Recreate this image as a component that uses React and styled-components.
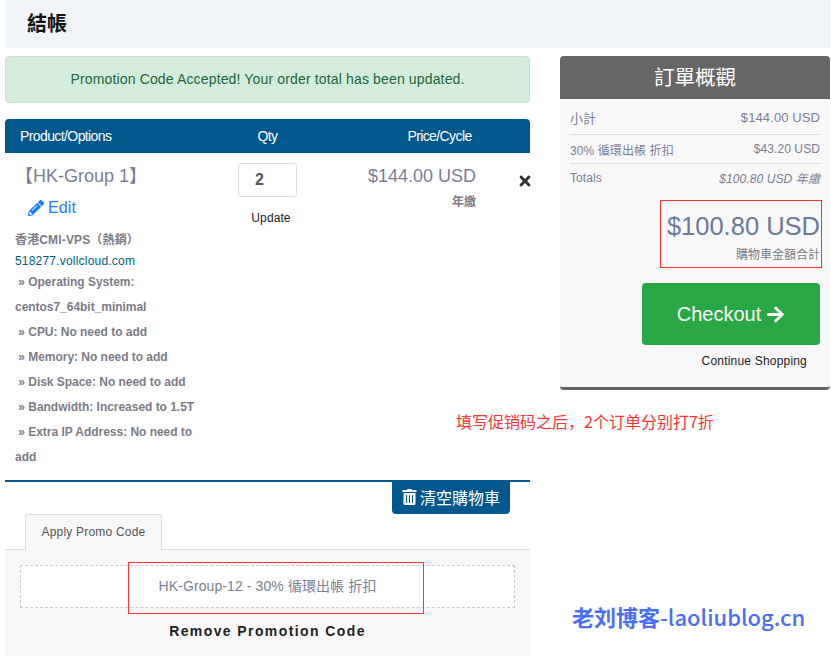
import React from 'react';
import styled, { createGlobalStyle } from 'styled-components';
import { FaPencilAlt, FaTimes, FaArrowRight, FaTrashAlt } from 'react-icons/fa';

const GlobalStyle = createGlobalStyle`
    html, body {
        margin: 0;
        padding: 0;
        background: #fff;
    }
    body {
        font-family: "Liberation Sans", "Noto Sans CJK TC", sans-serif;
        overflow: hidden;
    }
`;

const Page = styled.div`
    position: relative;
    width: 831px;
    height: 656px;
    padding-left: 5px;
    box-sizing: border-box;
    overflow: hidden;
`;

const Header = styled.div`
    height: 48px;
    width: 825px;
    background: #f1f5f9;
    display: flex;
    align-items: center;
    padding: 0 0 3px 22px;
    box-sizing: border-box;
`;

const Title = styled.h1`
    margin: 0;
    font-size: 20px;
    font-weight: 700;
    color: #111;
`;

const Columns = styled.div`
    display: flex;
    gap: 30px;
    margin-top: 8px;
    align-items: flex-start;
`;

const Main = styled.div`
    width: 525px;
`;

const Alert = styled.div`
    height: 47px;
    box-sizing: border-box;
    background: #d4edda;
    border: 1px solid #c3e6cb;
    border-radius: 4px;
    color: #22653a;
    font-size: 14px;
    letter-spacing: 0.15px;
    line-height: 45px;
    text-align: center;
`;

const CartGrid = styled.div`
    display: grid;
    grid-template-columns: 200px 125px 150px 50px;
`;

const TableHead = styled(CartGrid)`
    margin-top: 16px;
    height: 34px;
    align-items: center;
    background: #00588c;
    border-radius: 4px 4px 0 0;
    color: #fff;
    font-size: 14px;
    letter-spacing: -0.6px;
`;

const HeadCell = styled.div`
    text-align: ${p => p.$align || 'center'};
    padding-left: ${p => p.$indent || 0}px;
    grid-column: span ${p => p.$span || 1};
`;

const CartRow = styled(CartGrid)`
    height: 327px;
    border-bottom: 2px solid #00588c;
`;

const ProductCell = styled.div`
    padding: 10px 0 0 10px;
`;

const ProductName = styled.div`
    font-size: 18px;
    line-height: 26px;
    color: #7a7f96;
`;

const EditLink = styled.div`
    display: flex;
    align-items: center;
    gap: 4px;
    margin: 7px 0 0 13px;
    font-size: 16px;
    letter-spacing: 0.1px;
    line-height: 24px;
    color: #1a7dff;
    svg {
        width: 16px;
        height: 16px;
    }
`;

const Group = styled.div`
    margin-top: 10px;
    font-size: 12px;
    font-weight: 700;
    letter-spacing: 0.15px;
    line-height: 21px;
    color: #7c7c86;
`;

const Domain = styled.div`
    font-size: 12px;
    letter-spacing: 0.2px;
    line-height: 21px;
    color: #00617f;
`;

const Options = styled.div`
    width: 185px;
    font-size: 12px;
    font-weight: 700;
    letter-spacing: -0.03px;
    line-height: 25px;
    color: #7c7c86;
    margin-top: -2px;
`;

const QtyCell = styled.div`
    display: flex;
    flex-direction: column;
    align-items: center;
    padding-top: 10px;
`;

const QtyBox = styled.div`
    width: 59px;
    height: 34px;
    box-sizing: border-box;
    border: 1px solid #ddd;
    border-radius: 3px;
    font-size: 16px;
    font-weight: 700;
    line-height: 32px;
    padding-left: 16px;
    color: #555;
`;

const UpdateLabel = styled.div`
    margin: 12px 0 0 7px;
    font-size: 12px;
    letter-spacing: 0.1px;
    line-height: 18px;
    color: #222;
`;

const PriceCell = styled.div`
    text-align: right;
    padding: 11px 4px 0 0;
`;

const Price = styled.div`
    font-size: 18px;
    line-height: 24px;
    color: #7a7f96;
`;

const Cycle = styled.div`
    margin-top: 5px;
    font-size: 12px;
    font-weight: 700;
    line-height: 18px;
    color: #7c7c86;
`;

const RemoveCell = styled.div`
    padding: 20px 0 0 37px;
    color: #333;
    svg {
        width: 16px;
        height: 16px;
    }
`;

const EmptyRow = styled.div`
    display: flex;
    justify-content: flex-end;
    padding-right: 20px;
`;

const EmptyButton = styled.div`
    display: flex;
    align-items: center;
    gap: 3px;
    height: 32px;
    padding: 0 10px 2px;
    box-sizing: border-box;
    background: #00588c;
    border-radius: 0 0 4px 4px;
    color: #fff;
    font-size: 16px;
    svg {
        width: 15px;
        height: 16px;
    }
`;

const Tabs = styled.div`
    display: flex;
    padding-left: 20px;
    border-bottom: 1px solid #ddd;
    height: 35px;
`;

const Tab = styled.div`
    width: 137px;
    height: 36px;
    box-sizing: border-box;
    border: 1px solid #ddd;
    border-bottom: 0;
    border-radius: 3px 3px 0 0;
    background: #f8f8f8;
    font-size: 12px;
    letter-spacing: 0.2px;
    line-height: 34px;
    text-align: center;
    color: #555;
`;

const PromoPanel = styled.div`
    height: 106px;
    background: #f8f8f8;
    padding: 15px 15px 0;
    box-sizing: border-box;
`;

const PromoCode = styled.div`
    height: 43px;
    box-sizing: border-box;
    border: 1px dashed #ccc;
    background: #fff;
    font-size: 14px;
    letter-spacing: 0.1px;
    line-height: 41px;
    text-align: center;
    color: #7a7f96;
`;

const RemovePromo = styled.div`
    margin-top: 14px;
    font-size: 14px;
    font-weight: 700;
    letter-spacing: 1.4px;
    line-height: 18px;
    text-align: center;
    color: #222;
`;

const Sidebar = styled.div`
    width: 270px;
    border-radius: 4px;
    background: #f8f8f8;
    border-bottom: 3px solid #666;
`;

const SideTitle = styled.div`
    height: 43px;
    background: #666;
    border-radius: 4px 4px 0 0;
    color: #fff;
    font-size: 20.5px;
    line-height: 43px;
    text-align: center;
`;

const SideBody = styled.div`
    padding: 7px 10px 0;
    height: 288px;
    box-sizing: border-box;
`;

const SummaryRow = styled.div`
    display: flex;
    justify-content: space-between;
    align-items: center;
    height: ${p => p.$height}px;
    box-sizing: border-box;
    padding-bottom: ${p => p.$pad || 0}px;
    font-size: ${p => p.$size || 12}px;
    color: #7a7f96;
    letter-spacing: 0.1px;
    border-bottom: ${p => (p.$line ? '1px solid #ddd' : '0')};
`;

const Amount = styled.span`
    font-style: ${p => (p.$italic ? 'italic' : 'normal')};
`;

const TotalBlock = styled.div`
    margin-top: 18px;
    text-align: right;
`;

const TotalPrice = styled.div`
    font-size: 25.5px;
    line-height: 34px;
    color: #6c7a99;
`;

const TotalLabel = styled.div`
    margin-top: 2px;
    font-size: 12px;
    line-height: 20px;
    color: #7c7c86;
`;

const CheckoutButton = styled.div`
    display: flex;
    align-items: center;
    justify-content: center;
    gap: 5px;
    margin: 18px 0 0 auto;
    width: 178px;
    height: 62px;
    background: #28a745;
    border-radius: 4px;
    color: #fff;
    font-size: 20px;
    svg {
        width: 19px;
        height: 19px;
    }
`;

const ContinueLink = styled.div`
    margin: 8px 13px 0 0;
    text-align: right;
    font-size: 12px;
    line-height: 16px;
    letter-spacing: 0.2px;
    color: #222;
`;

const RedFrame = styled.div`
    position: absolute;
    left: ${p => p.$x}px;
    top: ${p => p.$y}px;
    width: ${p => p.$w}px;
    height: ${p => p.$h}px;
    box-sizing: border-box;
    border: 1px solid #f33;
`;

const Annotation = styled.div`
    position: absolute;
    left: 456px;
    top: 411px;
    font-family: "Noto Sans CJK SC", sans-serif;
    font-size: 16px;
    line-height: 20px;
    color: #f33;
    white-space: nowrap;
`;

const Watermark = styled.div`
    position: absolute;
    left: 572px;
    top: 602px;
    font-family: "Noto Sans CJK SC", sans-serif;
    font-size: 22px;
    font-weight: 700;
    line-height: 28px;
    color: #4a6ef5;
    white-space: nowrap;
`;

const WatermarkLatin = styled.span`
    font-size: 22px;
    font-weight: 500;
`;

const options = [
    '\u00a0» Operating System: centos7_64bit_minimal',
    '\u00a0» CPU: No need to add',
    '\u00a0» Memory: No need to add',
    '\u00a0» Disk Space: No need to add',
    '\u00a0» Bandwidth: Increased to 1.5T',
    '\u00a0» Extra IP Address: No need to add',
];

export default function App() {
    return (
        <Page>
            <GlobalStyle />
            <Header>
                <Title>結帳</Title>
            </Header>
            <Columns>
                <Main>
                    <Alert>Promotion Code Accepted! Your order total has been updated.</Alert>
                    <TableHead>
                        <HeadCell $align="left" $indent={15}>Product/Options</HeadCell>
                        <HeadCell>Qty</HeadCell>
                        <HeadCell $span={2} $indent={19}>Price/Cycle</HeadCell>
                    </TableHead>
                    <CartRow>
                        <ProductCell>
                            <ProductName>【HK-Group 1】</ProductName>
                            <EditLink><FaPencilAlt />Edit</EditLink>
                            <Group>香港CMI-VPS（熱銷）</Group>
                            <Domain>518277.vollcloud.com</Domain>
                            <Options>
                                {options.map(o => <div key={o}>{o}</div>)}
                            </Options>
                        </ProductCell>
                        <QtyCell>
                            <QtyBox>2</QtyBox>
                            <UpdateLabel>Update</UpdateLabel>
                        </QtyCell>
                        <PriceCell>
                            <Price>$144.00 USD</Price>
                            <Cycle>年繳</Cycle>
                        </PriceCell>
                        <RemoveCell><FaTimes /></RemoveCell>
                    </CartRow>
                    <EmptyRow>
                        <EmptyButton><FaTrashAlt />清空購物車</EmptyButton>
                    </EmptyRow>
                    <Tabs>
                        <Tab>Apply Promo Code</Tab>
                    </Tabs>
                    <PromoPanel>
                        <PromoCode>HK-Group-12 - 30% 循環出帳 折扣</PromoCode>
                        <RemovePromo>Remove Promotion Code</RemovePromo>
                    </PromoPanel>
                </Main>
                <Sidebar>
                    <SideTitle>訂單概觀</SideTitle>
                    <SideBody>
                        <SummaryRow $height={29} $pad={5} $size={13} $line>
                            <span>小計</span>
                            <Amount>$144.00 USD</Amount>
                        </SummaryRow>
                        <SummaryRow $height={29} $line>
                            <span>30% 循環出帳 折扣</span>
                            <Amount>$43.20 USD</Amount>
                        </SummaryRow>
                        <SummaryRow $height={27}>
                            <span>Totals</span>
                            <Amount $italic>$100.80 USD 年繳</Amount>
                        </SummaryRow>
                        <TotalBlock>
                            <TotalPrice>$100.80 USD</TotalPrice>
                            <TotalLabel>購物車金額合計</TotalLabel>
                        </TotalBlock>
                        <CheckoutButton>Checkout <FaArrowRight /></CheckoutButton>
                        <ContinueLink>Continue Shopping</ContinueLink>
                    </SideBody>
                </Sidebar>
            </Columns>
            <RedFrame $x={660} $y={200} $w={162} $h={68} />
            <RedFrame $x={128} $y={562} $w={296} $h={52} />
            <Annotation>填写促销码之后，2个订单分别打7折</Annotation>
            <Watermark>老刘博客<WatermarkLatin>-laoliublog.cn</WatermarkLatin></Watermark>
        </Page>
    );
}
